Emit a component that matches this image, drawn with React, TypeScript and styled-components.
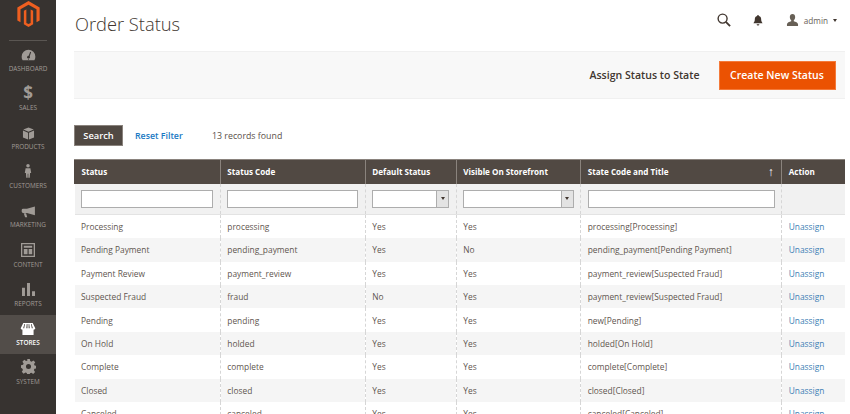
import React from "react";
import styled, { createGlobalStyle } from "styled-components";

const Global = createGlobalStyle`
  html, body { margin: 0; padding: 0; background: #fff; overflow: hidden; }
  body { font-family: "Open Sans", "Noto Sans", sans-serif; color: #41362f; }
  * { box-sizing: border-box; }
`;
const Page = styled.div`display: flex; width: 850px; height: 414px; overflow: hidden;`;
const Side = styled.nav`width: 56px; flex: none; background: #373330; display: flex; flex-direction: column; align-items: stretch;`;
const LogoWrap = styled.div`flex: none; height: 40.7px; margin: 0 9px; border-bottom: 1px solid #5a5652; display: flex; justify-content: center; padding-top: 1px;`;
const NavItem = styled.div<{ $active?: boolean }>`
  flex: none; height: 39.15px; display: flex; flex-direction: column; align-items: center; justify-content: flex-end; padding-bottom: 7px;
  background: ${p => (p.$active ? "#524d49" : "transparent")};
  color: ${p => (p.$active ? "#fff" : "#a09b96")};
  font-size: 6.4px; line-height: 9px; text-transform: uppercase;
  font-weight: ${p => (p.$active ? 600 : 400)};
  svg { display: block; margin-bottom: 2.5px; }
`;
const Dollar = styled.span`display: block; font-size: 17px; line-height: 15px; font-weight: 700; height: 15px; margin-bottom: 2.5px;`;
const Main = styled.main`flex: 1; min-width: 0; padding: 0 5px 0 18px; display: flex; flex-direction: column;`;
const Top = styled.header`flex: none; height: 51px; display: flex; align-items: center; justify-content: space-between; padding-bottom: 4px;`;
const Title = styled.h1`margin: 0 0 0 1px; font-size: 18.3px; font-weight: 300; color: #41362f; line-height: 30px; position: relative; top: 0.5px;`;
const Tools = styled.div`display: flex; align-items: center; padding-right: 8px; margin-bottom: 7px; color: #41362f; svg { display: block; }`;
const SearchBtn = styled.span`margin-right: 22px;`;
const Bell = styled.span`margin-right: 23px;`;
const User = styled.span`display: flex; align-items: center; gap: 5px; font-size: 8.2px; color: #676056;`;
const Caret = styled.i`width: 0; height: 0; border: 2.5px solid transparent; border-top: 3px solid #41362f; border-bottom: 0;`;
const Actions = styled.div`flex: none; height: 48px; background: #f8f8f8; border-top: 1px solid #f0f0f0; border-bottom: 1px solid #f0f0f0; display: flex; align-items: center; justify-content: flex-end; padding-right: 9.5px; gap: 19px;`;
const Plain = styled.span`font-size: 10.55px; font-weight: 600; color: #41362f;`;
const Primary = styled.span`height: 29px; width: 117px; background: #eb5202; border: 1px solid #f47a3a; color: #fff; font-size: 10.5px; font-weight: 600; display: flex; align-items: center; justify-content: center;`;
const Filters = styled.div`flex: none; height: 21px; margin-top: 26px; display: flex; align-items: center; font-size: 8.8px;`;
const SearchButton = styled.span`width: 49px; height: 21px; background: #514943; border: 1px solid #8a837d; color: #fff; font-weight: 600; font-size: 9.3px; display: flex; align-items: center; justify-content: center;`;
const Reset = styled.span`margin-left: 12px; color: #1979c3; font-weight: 600; width: 65px;`;
const Count = styled.span`margin-left: 12px; color: #5a5049;`;
const Table = styled.table`flex: none; margin-top: 13px; width: 770.5px; table-layout: fixed; border-collapse: collapse; font-size: 8.4px;`;
const Th = styled.th`height: 24px; background: #514943; color: #fff; font-size: 8.1px; font-weight: 700; text-align: left; padding: 0 6.5px 1px; border-left: 1px solid #8a837d; border-top: 1px solid #8a837d; &:first-child { border-left-color: #514943; }`;
const SortHead = styled.span`display: flex; justify-content: space-between;`;
const Arrow = styled.span`font-weight: 400; font-size: 12px; line-height: 11px; padding-right: 1px;`;
const FilterCell = styled.td`height: 31.4px; background: #f1f1f1; padding: 0 6.5px; border-left: 1px dashed #d6d6d6; border-bottom: 1px solid #e3e3e3; &:first-child { border-left: 0; }`;
const TextInput = styled.div`height: 18px; background: #fff; border: 1px solid #adadad;`;
const Select = styled.div`height: 18px; background: #fff; border: 1px solid #adadad; display: flex; justify-content: flex-end;`;
const SelectBtn = styled.span`width: 12px; background: #e3e3e3; border-left: 1px solid #adadad; display: flex; align-items: center; justify-content: center;`;
const SelectCaret = styled.i`width: 0; height: 0; border: 2.5px solid transparent; border-top: 3px solid #41362f; border-bottom: 0;`;
const Row = styled.tr<{ $odd: boolean }>`background: ${p => (p.$odd ? "#f5f5f5" : "#fff")};`;
const Td = styled.td`height: 23.4px; padding: 0 6.5px; color: #5f564f; border-left: 1px dashed #d6d6d6; white-space: nowrap; overflow: hidden; &:first-child { border-left: 0; }`;
const LinkText = styled.span`color: #3d7fb5;`;

const I = (p: { w: number; h: number; vb: string; children: React.ReactNode }) => (
  <svg width={p.w} height={p.h} viewBox={p.vb} fill="currentColor">{p.children}</svg>
);

const items: [string, React.ReactNode][] = [
  ["Dashboard", <I w={15} h={12} vb="0 0 17 14"><path d="M8.5 1A8 8 0 0 0 .5 9c0 1.6.4 3 1.2 4h13.6c.8-1 1.2-2.4 1.2-4a8 8 0 0 0-8-8z" /><path d="M9 9l2-5.5M8 12h1" stroke="#373330" strokeWidth="1.2" /><circle cx="8.5" cy="9.5" r="1.6" fill="#373330" /></I>],
  ["Sales", <Dollar>$</Dollar>],
  ["Products", <I w={13} h={13} vb="0 0 14 15"><path d="M7 .5l6 2.4L7 5.4 1 2.9zM.6 4l5.9 2.5v8L.6 12zM13.4 4L7.5 6.5v8l5.9-2.5z" /></I>],
  ["Customers", <I w={8} h={16} vb="0 0 10 18"><circle cx="5" cy="2.5" r="2.2" /><path d="M2 5.5h6l1 6H7.6l-.4 6H5.4v-5h-.8v5H2.8l-.4-6H1z" /></I>],
  ["Marketing", <I w={15} h={12} vb="0 0 18 15"><path d="M17 .5v11L7 8.6H2.2A1.7 1.7 0 0 1 .5 6.9V5A1.7 1.7 0 0 1 2.2 3.3H7z" /><path d="M3 9.2h3l1.4 5H4.7z" /></I>],
  ["Content", <I w={14} h={14} vb="0 0 15 15"><path fillRule="evenodd" d="M0 0h15v15H0zM1.4 1.4v12.2h12.2V1.4zM3 3h9v2H3zM3 6.4h4v5.6H3zM8.2 6.4H12v5.6H8.2z" /></I>],
  ["Reports", <I w={13} h={13} vb="0 0 14 14"><path d="M0 5h3.2v9H0zM5.4 0h3.2v14H5.4zM10.8 9H14v5h-3.2z" /></I>],
  ["Stores", <I w={16} h={12} vb="0 0 17 14"><path fillRule="evenodd" d="M3 0h11l3 6.2c0 1-.9 1.6-2 1.6V14H2V7.8C.9 7.8 0 7.2 0 6.2zM4.3 1.3L2.8 6h1.3l1-4.7zM7 1.3L6.5 6h1.4V1.3zM9.2 1.3V6h1.4L10 1.3zM11.9 1.3l1 4.7h1.3l-1.5-4.7z" /></I>],
  ["System", <I w={15} h={15} vb="0 0 16 16"><path fillRule="evenodd" d="M6.6 0h2.8l.4 2.2 1.5.6 1.9-1.3 2 2-1.3 1.900.6 1.500 2 .4v2.800l-2.200.4-.6 1.500 1.300 1.900-2 2-1.900-1.300-1.500.6-.4 2H6.600l-.4-2.200-1.500-.6-1.900 1.300-2-2 1.300-1.900-.6-1.500L0 9.400V6.600l2.200-.4.600-1.500-1.300-1.900 2-2 1.900 1.300 1.500-.6zM8 5.300a2.700 2.700 0 1 0 0 5.400 2.700 2.700 0 0 0 0-5.400z" /></I>],
];

const rows = [
  ["Processing", "processing", "Yes", "Yes", "processing[Processing]"],
  ["Pending Payment", "pending_payment", "Yes", "No", "pending_payment[Pending Payment]"],
  ["Payment Review", "payment_review", "Yes", "Yes", "payment_review[Suspected Fraud]"],
  ["Suspected Fraud", "fraud", "No", "Yes", "payment_review[Suspected Fraud]"],
  ["Pending", "pending", "Yes", "Yes", "new[Pending]"],
  ["On Hold", "holded", "Yes", "Yes", "holded[On Hold]"],
  ["Complete", "complete", "Yes", "Yes", "complete[Complete]"],
  ["Closed", "closed", "Yes", "Yes", "closed[Closed]"],
  ["Canceled", "canceled", "Yes", "Yes", "canceled[Canceled]"],
];

export default function App() {
  return (
    <Page>
      <Global />
      <Side>
        <LogoWrap>
          <svg width="23" height="26" viewBox="0 0 24 28">
            <path fill="#ee5f20" d="M12 0L0 7v14l3.400 2V9l8.600-5 8.600 5v14l3.400-2V7z" />
            <path fill="#ee5f20" d="M12 28l-5-2.900V10.600l2.700-1.500v14.500l2.300 1.300 2.300-1.300V9.100l2.700 1.500v14.500z" />
          </svg>
        </LogoWrap>
        {items.map(([label, icon]) => (
          <NavItem key={label} $active={label === "Stores"}>{icon}{label}</NavItem>
        ))}
      </Side>
      <Main>
        <Top>
          <Title>Order Status</Title>
          <Tools>
            <SearchBtn>
              <svg width="14" height="14" viewBox="0 0 15 15" fill="none" stroke="currentColor" strokeWidth="1.500"><circle cx="6" cy="6" r="4.800" /><path d="M9.500 9.500L14 14" strokeWidth="2" /></svg>
            </SearchBtn>
            <Bell>
              <svg width="10" height="11" viewBox="0 0 11 12" fill="currentColor"><path d="M5.500 0a1 1 0 0 1 1 1c2 .5 2.500 2 2.500 4 0 2 1 3 1.500 4H.5C1 8 2 7 2 5c0-2 .5-3.500 2.500-4a1 1 0 0 1 1-1zM4 10h3a1.500 1.500 0 0 1-3 0z" /></svg>
            </Bell>
            <User>
              <svg width="13" height="12" viewBox="0 0 13 13" fill="currentColor"><path d="M6.500 0C8.300 0 9.400 1.300 9.400 3.200c0 1.600-.7 2.900-1.500 3.600v1c2 .7 4.600 1.400 4.600 3.200V13H.5v-2c0-1.800 2.600-2.500 4.600-3.200v-1C4.300 6.100 3.600 4.800 3.600 3.200 3.600 1.300 4.700 0 6.500 0z" /></svg>
              admin
              <Caret />
            </User>
          </Tools>
        </Top>
        <Actions>
          <Plain>Assign Status to State</Plain>
          <Primary>Create New Status</Primary>
        </Actions>
        <Filters>
          <SearchButton>Search</SearchButton>
          <Reset>Reset Filter</Reset>
          <Count>13 records found</Count>
        </Filters>
        <Table>
          <colgroup>
            <col width="145.8" /><col width="145" /><col width="91" /><col width="124.4" /><col width="201" /><col width="63.3" />
          </colgroup>
          <thead>
            <tr>
              <Th>Status</Th>
              <Th>Status Code</Th>
              <Th>Default Status</Th>
              <Th>Visible On Storefront</Th>
              <Th><SortHead>State Code and Title<Arrow>↑</Arrow></SortHead></Th>
              <Th>Action</Th>
            </tr>
            <tr>
              <FilterCell><TextInput /></FilterCell>
              <FilterCell><TextInput /></FilterCell>
              <FilterCell><Select><SelectBtn><SelectCaret /></SelectBtn></Select></FilterCell>
              <FilterCell><Select><SelectBtn><SelectCaret /></SelectBtn></Select></FilterCell>
              <FilterCell><TextInput /></FilterCell>
              <FilterCell />
            </tr>
          </thead>
          <tbody>
            {rows.map((r, i) => (
              <Row key={r[0]} $odd={i % 2 === 1}>
                {r.map((c, j) => <Td key={j}>{c}</Td>)}
                <Td><LinkText>Unassign</LinkText></Td>
              </Row>
            ))}
          </tbody>
        </Table>
      </Main>
    </Page>
  );
}
